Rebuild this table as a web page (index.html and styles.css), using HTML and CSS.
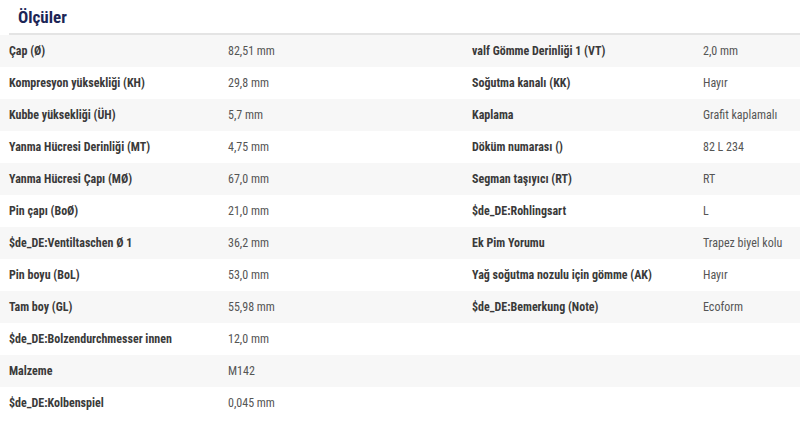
FILE: index.html
```html
<!DOCTYPE html>
<html>
<head>
<meta charset="utf-8">
<link rel="stylesheet" href="styles.css">
</head>
<body>
<div class="panel">
  <h2 class="title">Ölçüler</h2>
  <table class="specs">
    <tr><th>Çap (Ø)</th><td>82,51 mm</td><th>valf Gömme Derinliği 1 (VT)</th><td>2,0 mm</td></tr>
    <tr><th>Kompresyon yüksekliği (KH)</th><td>29,8 mm</td><th>Soğutma kanalı (KK)</th><td>Hayır</td></tr>
    <tr><th>Kubbe yüksekliği (ÜH)</th><td>5,7 mm</td><th>Kaplama</th><td>Grafit kaplamalı</td></tr>
    <tr><th>Yanma Hücresi Derinliği (MT)</th><td>4,75 mm</td><th>Döküm numarası ()</th><td>82 L 234</td></tr>
    <tr><th>Yanma Hücresi Çapı (MØ)</th><td>67,0 mm</td><th>Segman taşıyıcı (RT)</th><td>RT</td></tr>
    <tr><th>Pin çapı (BoØ)</th><td>21,0 mm</td><th>$de_DE:Rohlingsart</th><td>L</td></tr>
    <tr><th>$de_DE:Ventiltaschen Ø 1</th><td>36,2 mm</td><th>Ek Pim Yorumu</th><td>Trapez biyel kolu</td></tr>
    <tr><th>Pin boyu (BoL)</th><td>53,0 mm</td><th>Yağ soğutma nozulu için gömme (AK)</th><td>Hayır</td></tr>
    <tr><th>Tam boy (GL)</th><td>55,98 mm</td><th>$de_DE:Bemerkung (Note)</th><td>Ecoform</td></tr>
    <tr><th>$de_DE:Bolzendurchmesser innen</th><td>12,0 mm</td><th></th><td></td></tr>
    <tr><th>Malzeme</th><td>M142</td><th></th><td></td></tr>
    <tr><th>$de_DE:Kolbenspiel</th><td>0,045 mm</td><th></th><td></td></tr>
  </table>
</div>
</body>
</html>
```

FILE: styles.css
```css
html, body {
  margin: 0;
  padding: 0;
  background: #fff;
}
body {
  font-family: "Roboto Condensed", Roboto, "Liberation Sans", sans-serif;
  width: 800px;
  height: 430px;
  overflow: hidden;
}
.title {
  margin: 0 0 0 9px;
  padding: 7px 0 6px 9px;
  font-size: 17px;
  font-weight: 700;
  line-height: 20px;
  color: #1c2556;
  border-bottom: 2px solid #e4e4e4;
}
.specs {
  width: 800px;
  border-collapse: collapse;
  font-size: 12px;
}
.specs tr:nth-child(odd) {
  background: #f7f7f7;
}
.specs th,
.specs td {
  height: 32px;
  padding: 0;
  text-align: left;
  vertical-align: middle;
}
.specs th {
  font-weight: 700;
  color: #3a3a3a;
}
.specs td {
  font-weight: 400;
  color: #555;
}
.specs th:nth-child(1) { width: 219px; padding-left: 9px; }
.specs td:nth-child(2) { width: 244px; }
.specs th:nth-child(3) { width: 231px; }
.specs td:nth-child(4) { width: auto; }
```
